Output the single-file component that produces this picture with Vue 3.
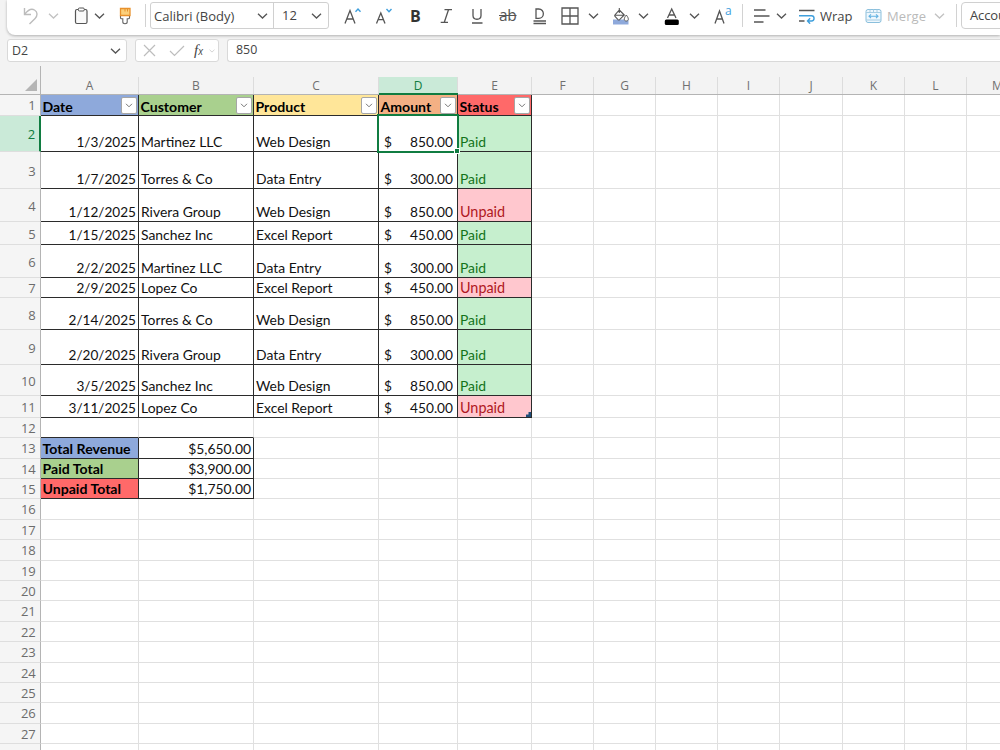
<script setup>
const columns = ['A', 'B', 'C', 'D', 'E', 'F', 'G', 'H', 'I', 'J', 'K', 'L', 'M']
const heads = ['Date', 'Customer', 'Product', 'Amount', 'Status']
const invoices = [
  ['1/3/2025', 'Martinez LLC', 'Web Design', '850.00', 'Paid'],
  ['1/7/2025', 'Torres & Co', 'Data Entry', '300.00', 'Paid'],
  ['1/12/2025', 'Rivera Group', 'Web Design', '850.00', 'Unpaid'],
  ['1/15/2025', 'Sanchez Inc', 'Excel Report', '450.00', 'Paid'],
  ['2/2/2025', 'Martinez LLC', 'Data Entry', '300.00', 'Paid'],
  ['2/9/2025', 'Lopez Co', 'Excel Report', '450.00', 'Unpaid'],
  ['2/14/2025', 'Torres & Co', 'Web Design', '850.00', 'Paid'],
  ['2/20/2025', 'Rivera Group', 'Data Entry', '300.00', 'Paid'],
  ['3/5/2025', 'Sanchez Inc', 'Web Design', '850.00', 'Paid'],
  ['3/11/2025', 'Lopez Co', 'Excel Report', '450.00', 'Unpaid'],
]
const totals = {
  13: ['Total Revenue', '$5,650.00', 'blue'],
  14: ['Paid Total', '$3,900.00', 'green'],
  15: ['Unpaid Total', '$1,750.00', 'red'],
}
const fills = ['blue', 'green', 'yellow', 'orange', 'red']

function cell(r, c) {
  if (r === 1 && c < 5) return { text: heads[c], cls: ['dark', 'bold', 'head', fills[c]], filter: true }
  if (r >= 2 && r <= 11 && c < 5) {
    const text = invoices[r - 2][c]
    const cls = ['dark']
    if (c === 0) cls.push('right', 'date')
    if (c === 3) cls.push('money')
    if (c === 4) cls.push(text === 'Paid' ? 'paid' : 'unpaid')
    return { text, cls, money: c === 3, selected: r === 2 && c === 3, corner: r === 11 && c === 4 }
  }
  if (totals[r] && c < 2) {
    return { text: totals[r][c], cls: c === 0 ? ['dark', 'bold', totals[r][2]] : ['dark', 'right'] }
  }
  return { text: '', cls: r === 12 && c < 2 ? ['dark-bottom'] : [] }
}
</script>

<template>
  <div class="app">
    <div class="ribbon">
      <svg class="ic" width="17" height="20" viewBox="0 0 17 20"><path d="M2.500 2v6.500H9M2.800 8.200C6 4 9.500 2.300 12.500 4c3.500 2 3 6 .6 8.400L7.500 18" fill="none" stroke="#bcbcbc" stroke-width="1.400"/></svg>
      <svg class="chev pale" width="11" height="6" viewBox="0 0 11 6"><path d="M1 .7l4.500 4.300L10 .7"/></svg>
      <svg class="ic" width="15" height="18" viewBox="0 0 15 18"><rect x="1.500" y="2.500" width="11.500" height="14" rx="1.500" fill="#fafafa" stroke="#555" stroke-width="1.200"/><rect x="4.300" y="1" width="6" height="3" rx="1.200" fill="#fff" stroke="#555"/></svg>
      <svg class="chev" width="11" height="6" viewBox="0 0 11 6"><path d="M1 .7l4.500 4.300L10 .7"/></svg>
      <svg class="ic" width="14" height="18" viewBox="0 0 14 18"><path d="M2.500 8.500v2.200q0 1 1 1h1.300v3.300q0 1.700 2.200 1.700t2.200-1.700v-3.300h1.300q1 0 1-1V8.500" fill="#fff" stroke="#666" stroke-width="1.100"/><path d="M2.500 1.500h9.500v7H2.500z" fill="#fbd07c" stroke="#e8912c" stroke-width="1.300"/><path d="M7 1.500v3M9.500 1.500v3" stroke="#e8912c"/></svg>
      <i class="sep"></i>
      <div class="fontbox">
        <span class="fname">Calibri (Body)</span>
        <svg class="chev" width="11" height="6" viewBox="0 0 11 6"><path d="M1 .7l4.500 4.300L10 .7"/></svg>
        <span class="fsize">12</span>
        <svg class="chev" width="11" height="6" viewBox="0 0 11 6"><path d="M1 .7l4.500 4.300L10 .7"/></svg>
      </div>
      <svg class="ic" width="18" height="20" viewBox="0 0 18 20"><path d="M1 17.500L6 4.500 11 17.500M2.800 13h6.400" class="ln"/><path d="M11.500 5.700L14 3l2.500 2.700" class="bl"/></svg>
      <svg class="ic" width="18" height="20" viewBox="0 0 18 20"><path d="M1.500 17.500L5.800 7 10 17.500M3 13.700h5.600" class="ln"/><path d="M11.500 3L14 5.700 16.500 3" class="bl"/></svg>
      <b class="gl bold-g">B</b>
      <svg class="ic" width="13" height="16" viewBox="0 0 13 16"><path d="M4.500 1.700H12M.7 14.300H8M8.500 1.700L4.300 14.300" class="ln"/></svg>
      <svg class="ic" width="12" height="16" viewBox="0 0 12 16"><path d="M2 1v6.500c0 5 8 5 8 0V1M1 15h10.500" class="ln"/></svg>
      <span class="gl strike">ab</span>
      <svg class="ic" width="14" height="18" viewBox="0 0 14 18"><path d="M3 2v9.300h2.700c6.200 0 6.200-9.300 0-9.300zM.5 14h12.500M.5 16.500h12.500" class="ln"/></svg>
      <svg class="ic" width="18" height="18" viewBox="0 0 18 18"><path d="M1 1h16v16H1zM9 1v16M1 9h16" class="ln"/></svg>
      <svg class="chev" width="11" height="6" viewBox="0 0 11 6"><path d="M1 .7l4.500 4.300L10 .7"/></svg>
      <svg class="ic" width="18" height="20" viewBox="0 0 18 20"><path d="M1 13.500h15.500V18.500H1z" fill="#8ea9db"/><path d="M7.300 4l5 5-4.700 4.700q-.8.600-1.600 0L3 10.500q-.7-.8 0-1.600zM7.300 7V2M3 9.200h9" fill="#fff" stroke="#555" stroke-width="1.100"/><path d="M14.300 9c-3.400 4.200-1.900 6 0 6s3.400-1.800 0-6z" fill="#fff" stroke="#555"/></svg>
      <svg class="chev" width="11" height="6" viewBox="0 0 11 6"><path d="M1 .7l4.500 4.300L10 .7"/></svg>
      <svg class="ic" width="16" height="20" viewBox="0 0 16 20"><path d="M3.500 12L7.700 3 12 12M5 9h5.400" class="ln"/><rect x=".8" y="13.500" width="14" height="5.500" rx="1.500" fill="#000"/></svg>
      <svg class="chev" width="11" height="6" viewBox="0 0 11 6"><path d="M1 .7l4.500 4.300L10 .7"/></svg>
      <span class="case"><svg width="11" height="20" viewBox="0 0 11 20"><path d="M1 17.500L5.500 5 10 17.500M2.500 13h6" class="ln"/></svg><span>a</span></span>
      <i class="sep"></i>
      <svg class="ic" width="17" height="16" viewBox="0 0 17 16"><path d="M1 2h11.500M1 8h15.500M1 14h9.500" class="ln"/></svg>
      <svg class="chev" width="11" height="6" viewBox="0 0 11 6"><path d="M1 .7l4.500 4.300L10 .7"/></svg>
      <span class="lab wrap"><svg width="18" height="16" viewBox="0 0 18 16"><path d="M1 2.500h15.500M1 13h5.500" class="ln"/><path d="M1 7.700h12.500c3.400 0 3.400 5.300 0 5.300H9.500m2.600-2.700L9.500 13l2.600 2.700" class="bl"/></svg>Wrap</span>
      <span class="lab merge"><svg width="18" height="16" viewBox="0 0 18 16"><rect x="1" y="1.500" width="15" height="13" rx="2" fill="#eef7fd" stroke="#8abfdc"/><path d="M5 1.500v2.500M8.500 1.500v2.500M12 1.500v2.500M1 4.500h15M1 12h15" stroke="#a6cde3" fill="none"/><path d="M4 8.200h9M6 6.300L4 8.200l2 1.900M11 6.300l2 1.900-2 1.900" fill="none" stroke="#62b2e2" stroke-width="1.100"/></svg>Merge</span>
      <svg class="chev pale" width="11" height="6" viewBox="0 0 11 6"><path d="M1 .7l4.500 4.300L10 .7"/></svg>
      <i class="sep"></i>
      <div class="numfmt">Accounting</div>
    </div>

    <div class="formula">
      <div class="box name"><span>D2</span><svg class="chev" width="11" height="6" viewBox="0 0 11 6"><path d="M1 .7l4.500 4.300L10 .7"/></svg></div>
      <div class="box fx">
        <svg width="13" height="13" viewBox="0 0 13 13"><path d="M1 1l11 11M12 1L1 12" fill="none" stroke="#bdbdbd" stroke-width="1.200"/></svg>
        <svg class="tick" width="16" height="12" viewBox="0 0 16 12"><path d="M1 6l4.500 4.500L15 1" fill="none" stroke="#bdbdbd" stroke-width="1.200"/></svg>
        <span class="f">f<small>x</small></span>
        <svg class="chev tiny pale" width="6" height="4" viewBox="0 0 11 6"><path d="M1 .7l4.500 4.300L10 .7"/></svg>
      </div>
      <div class="box value">850</div>
    </div>

    <div class="sheet">
      <div class="corner-box"><svg width="12" height="12" viewBox="0 0 12 12"><path d="M12 0v12H0z" fill="#b5b5b5"/></svg></div>
      <div v-for="c in columns" :key="c" class="colhead" :class="{ active: c === 'D' }"><span>{{ c }}</span></div>
      <template v-for="r in 28" :key="r">
        <div class="rowhead" :class="{ active: r === 2, low: r > 2 && r < 11 && r !== 7 }">{{ r < 28 ? r : '' }}</div>
        <div v-for="(col, c) in columns" :key="col" class="cell" :class="cell(r, c).cls">
          <span v-if="cell(r, c).money" class="dollar">$</span>
          <span class="t">{{ cell(r, c).text }}</span>
          <span v-if="cell(r, c).filter" class="filter"><svg width="8" height="5" viewBox="0 0 8 5"><path d="M1 .8l3 3 3-3" fill="none" stroke="#777"/></svg></span>
          <i v-if="cell(r, c).selected" class="selection"></i>
          <i v-if="cell(r, c).corner" class="table-corner"></i>
        </div>
      </template>
    </div>
  </div>
</template>

<style>
body { margin: 0; background: #fff; overflow: hidden; }
</style>

<style scoped>
.app { width: 1000px; height: 750px; overflow: hidden; background: #f3f3f3; font-family: "Open Sans", "Noto Sans", sans-serif; color: #444; display: flex; flex-direction: column; }
.ribbon {
  box-sizing: border-box; flex: none; height: 35px; margin-left: 7px; padding: 0 0 4px 15px; background: #fff;
  border-radius: 0 0 0 8px; box-shadow: 0 1px 3px rgba(0, 0, 0, .28);
  display: grid; align-items: center; justify-items: start;
  grid-template-columns: 26px 26px 20px 24px 27px 5px 194px 31px 35px 30px 31px 28px 34px 28px 27px 24px 26px 26px 25px 25px 28px 11px 23px 22px 67px 69px 22px 5px 39px;
}
svg { display: block; flex: none; }
.chev path { fill: none; stroke: #555; stroke-width: 1.3; }
.chev.pale path { stroke: #c2c2c2; }
.ln { fill: none; stroke: #555; stroke-width: 1.3; }
.bl { fill: none; stroke: #3f9fdc; stroke-width: 1.4; }
.sep { width: 1px; height: 23px; background: #d2d2d2; }
.fontbox {
  box-sizing: border-box; width: 179px; height: 27px; border: 1px solid #d0d0d0; border-radius: 3px;
  display: grid; grid-template-columns: 106px 17px 37px 18px; align-items: center; font-size: 13px;
}
.fname { padding-left: 3px; white-space: nowrap; }
.fsize { margin-left: -1px; border-left: 1px solid #d0d0d0; height: 25px; line-height: 25px; padding-left: 8px; }
.gl { line-height: 20px; }
.bold-g { font-size: 16px; color: #333; }
.strike { font-size: 15.5px; line-height: 18px; margin-bottom: 2px; text-decoration: line-through; text-decoration-thickness: 1px; color: #555; letter-spacing: -.3px; }
.case { display: flex; height: 20px; }
.case span { font-size: 12px; line-height: 10px; color: #3f9fdc; }
.lab { display: flex; align-items: center; gap: 4px; font-size: 13px; line-height: 20px; }
.merge { color: #bababa; letter-spacing: .1px; }
.numfmt { box-sizing: border-box; width: 60px; height: 27px; border: 1px solid #d0d0d0; border-radius: 4px; padding-left: 8px; line-height: 25px; font-size: 13px; letter-spacing: -.1px; }

.formula { flex: none; display: flex; height: 23px; margin: 4px 0 0 7px; }
.box { box-sizing: border-box; height: 23px; background: #fff; border: 1px solid #d9d9d9; border-radius: 3px; display: flex; align-items: center; font-size: 12.4px; }
.name { width: 120px; padding: 0 5px 0 4px; justify-content: space-between; letter-spacing: -.1px; }
.fx { width: 84px; margin-left: 8px; padding-left: 7px; }
.tick { margin-left: 13px; }
.f { margin-left: 9px; font-family: "Liberation Serif", serif; font-style: italic; font-size: 15px; line-height: 20px; }
.f small { font-family: "Open Sans", sans-serif; font-size: 10px; }
.tiny { margin-left: 6px; }
.value { margin-left: 8px; flex: 1; border-right: 0; border-radius: 3px 0 0 3px; padding: 0 0 2px 8px; line-height: 19px; }

.sheet {
  flex: none; display: grid; width: 1028px; margin-top: 4px;
  grid-template-columns: 41px 98px 115px 125px 79px 74px 62px 62px 62px 62px 63px 62px 62px 62px;
  grid-template-rows: 29px 21px 36px 37px 33px 23px 33px 20px 32px 35px 31px 22px 20px 21px 20px 20px 21px 20px 21px 20px 20px 21px 20px 21px 20px 20px 21px 20px 20px;
}
.corner-box { border-right: 1px solid #b4b4b4; border-bottom: 1px solid #b4b4b4; display: flex; align-items: flex-end; justify-content: flex-end; padding: 0 3px 3px 0; }
.colhead { border-bottom: 1px solid #b4b4b4; padding-top: 11px; font-size: 12px; color: #707070; }
.colhead span { display: block; height: 17px; line-height: 18px; text-align: center; border-right: 1px solid #dcdcdc; }
.colhead.active { position: relative; color: #107c41; border-bottom: 2px solid #107c41; margin-top: 11px; padding: 0; background: #caead8; }
.colhead.active span { height: 16px; }
.rowhead {
  position: relative; border-right: 1px solid #b4b4b4; border-bottom: 1px solid #dedede; background: #f5f5f5; color: #6c6c6c; font-size: 13px;
  display: flex; align-items: center; justify-content: flex-end; padding-right: 4.5px; line-height: 18px; letter-spacing: -.2px;
}
.rowhead.low { padding-top: 2px; }
.rowhead.active { background: #caead8; color: #107c41; border-right: 2px solid #107c41; padding-right: 4px; }
.cell {
  position: relative; box-sizing: border-box; min-width: 0; background: #fff; border-right: 1px solid #e0e0e0; border-bottom: 1px solid #e0e0e0;
  display: flex; align-items: flex-end; padding: 0 2px; font-family: Lato, sans-serif; font-size: 13.9px; line-height: 18px; color: #111; white-space: nowrap;
}
.dark { border-color: #2b2b2b; }
.dark-bottom { border-bottom-color: #2b2b2b; }
.right { justify-content: flex-end; }
.date { font-size: 13.6px; }
.bold { font-weight: 700; font-size: 14.1px; color: #000; padding-left: 1.5px; }
.head { line-height: 16.5px; }
.blue { background: #8ea9db; }
.green { background: #a9d08e; }
.yellow { background: #ffe699; }
.orange { background: #f4b084; }
.red { background: #ff6969; }
.money { justify-content: space-between; padding: 0 4px 0 5px; font-size: 13.7px; }
.paid { background: #c6efce; color: #13741b; }
.unpaid { background: #ffc7ce; color: #b01822; font-size: 14.4px; }
.filter {
  position: absolute; right: 1px; bottom: 1px; box-sizing: border-box; width: 16px; height: 17px; background: #fff; border: 1px solid #a6a6a6; border-radius: 2px;
  display: flex; align-items: center; justify-content: center;
}
.selection { position: absolute; z-index: 2; left: -2px; top: -2px; right: -2px; bottom: -2px; border: 2px solid #107c41; }
.selection::after { content: ""; position: absolute; right: -3px; bottom: -3px; width: 4px; height: 4px; background: #107c41; border: 1px solid #fff; }
.table-corner { position: absolute; right: 0; bottom: 0; width: 5px; height: 5px; background: #1f4e78; clip-path: polygon(100% 0, 100% 100%, 0 100%, 0 50%, 50% 50%, 50% 0); }
</style>
